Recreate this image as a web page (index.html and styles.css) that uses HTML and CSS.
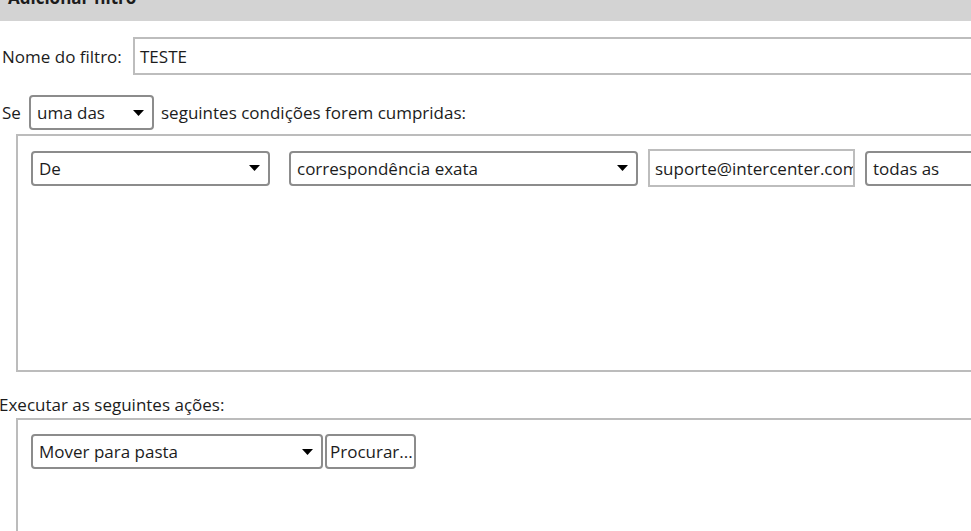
FILE: index.html
```html
<!DOCTYPE html>
<html lang="pt">
<head>
<meta charset="utf-8">
<title>Adicionar filtro</title>
<link rel="stylesheet" href="styles.css">
</head>
<body>
<div class="dialog">
  <div class="titlebar"><span class="title">Adicionar filtro</span></div>

  <div class="name-row">
    <label class="name-label">Nome do filtro:</label>
    <div class="textbox name-input">TESTE</div>
  </div>

  <div class="cond-row">
    <span class="se">Se</span>
    <div class="select select-match"><span>uma das</span><svg class="arrow" viewBox="0 0 11 6"><path d="M0 0H11L5.5 6Z"/></svg></div>
    <span class="cond-text">seguintes condições forem cumpridas:</span>
  </div>

  <div class="box cond-box">
    <div class="rule">
      <div class="select sel-field"><span>De</span><svg class="arrow" viewBox="0 0 11 6"><path d="M0 0H11L5.5 6Z"/></svg></div>
      <div class="select sel-op"><span>correspondência exata</span><svg class="arrow" viewBox="0 0 11 6"><path d="M0 0H11L5.5 6Z"/></svg></div>
      <div class="textbox val-input">suporte@intercenter.com</div>
      <div class="select sel-when"><span>todas as</span><svg class="arrow" viewBox="0 0 11 6"><path d="M0 0H11L5.5 6Z"/></svg></div>
    </div>
  </div>

  <div class="actions-label">Executar as seguintes ações:</div>

  <div class="box action-box">
    <div class="rule">
      <div class="select sel-action"><span>Mover para pasta</span><svg class="arrow" viewBox="0 0 11 6"><path d="M0 0H11L5.5 6Z"/></svg></div>
      <div class="button">Procurar...</div>
    </div>
  </div>
</div>
</body>
</html>
```

FILE: styles.css
```css
html, body {
  margin: 0;
  padding: 0;
  overflow: hidden;
  background: #fff;
}

body {
  font-family: "Open Sans", "Noto Sans", sans-serif;
  font-size: 17px;
  color: #1c1c1c;
}

.dialog {
  width: 1200px;
}

.titlebar {
  height: 21px;
  background: #d3d3d3;
  overflow: hidden;
}

.title {
  display: block;
  margin-top: -13px;
  margin-left: 8px;
  font-weight: bold;
  font-size: 17px;
  line-height: 22px;
}

.name-row {
  display: flex;
  align-items: center;
  margin-top: 16px;
  padding-left: 2px;
}

.name-label {
  width: 131px;
  flex: none;
}

.textbox {
  box-sizing: border-box;
  border: 2px solid #bdbdbd;
  background: #fff;
  display: flex;
  align-items: center;
  padding-left: 5px;
  white-space: nowrap;
  overflow: hidden;
}

.name-input {
  height: 38px;
  width: 1000px;
}

.cond-row {
  display: flex;
  align-items: center;
  margin-top: 20px;
  padding-left: 2px;
}

.se {
  width: 27px;
}

.select {
  box-sizing: border-box;
  display: flex;
  align-items: center;
  justify-content: space-between;
  height: 35px;
  border: 2px solid #8c8c8c;
  border-radius: 4px;
  background: #fff;
  padding: 0 8px 0 6px;
  white-space: nowrap;
}

.arrow {
  width: 11px;
  height: 6px;
  flex: none;
  fill: #000;
}

.select-match {
  width: 125px;
  margin-right: 7px;
}

.box {
  box-sizing: border-box;
  border: 2px solid #bcbcbc;
  margin-left: 16px;
  width: 1100px;
}

.cond-box {
  margin-top: 4px;
  height: 238px;
  padding: 13px 0 0 13px;
}

.rule {
  display: flex;
  align-items: center;
}

.sel-field {
  width: 239px;
  margin-right: 19px;
}

.sel-op {
  width: 349px;
  margin-right: 10px;
}

.val-input {
  height: 38px;
  width: 207px;
  margin-right: 10px;
}

.sel-when {
  width: 200px;
}

.actions-label {
  margin-top: 20px;
  margin-left: -1px;
  height: 26px;
  line-height: 26px;
}

.action-box {
  height: 200px;
  padding: 14px 0 0 13px;
}

.sel-action {
  width: 292px;
  margin-right: 2px;
}

.button {
  box-sizing: border-box;
  height: 35px;
  border: 2px solid #8c8c8c;
  border-radius: 4px;
  padding: 0 3px;
  display: flex;
  align-items: center;
  width: 91px;
}
```
